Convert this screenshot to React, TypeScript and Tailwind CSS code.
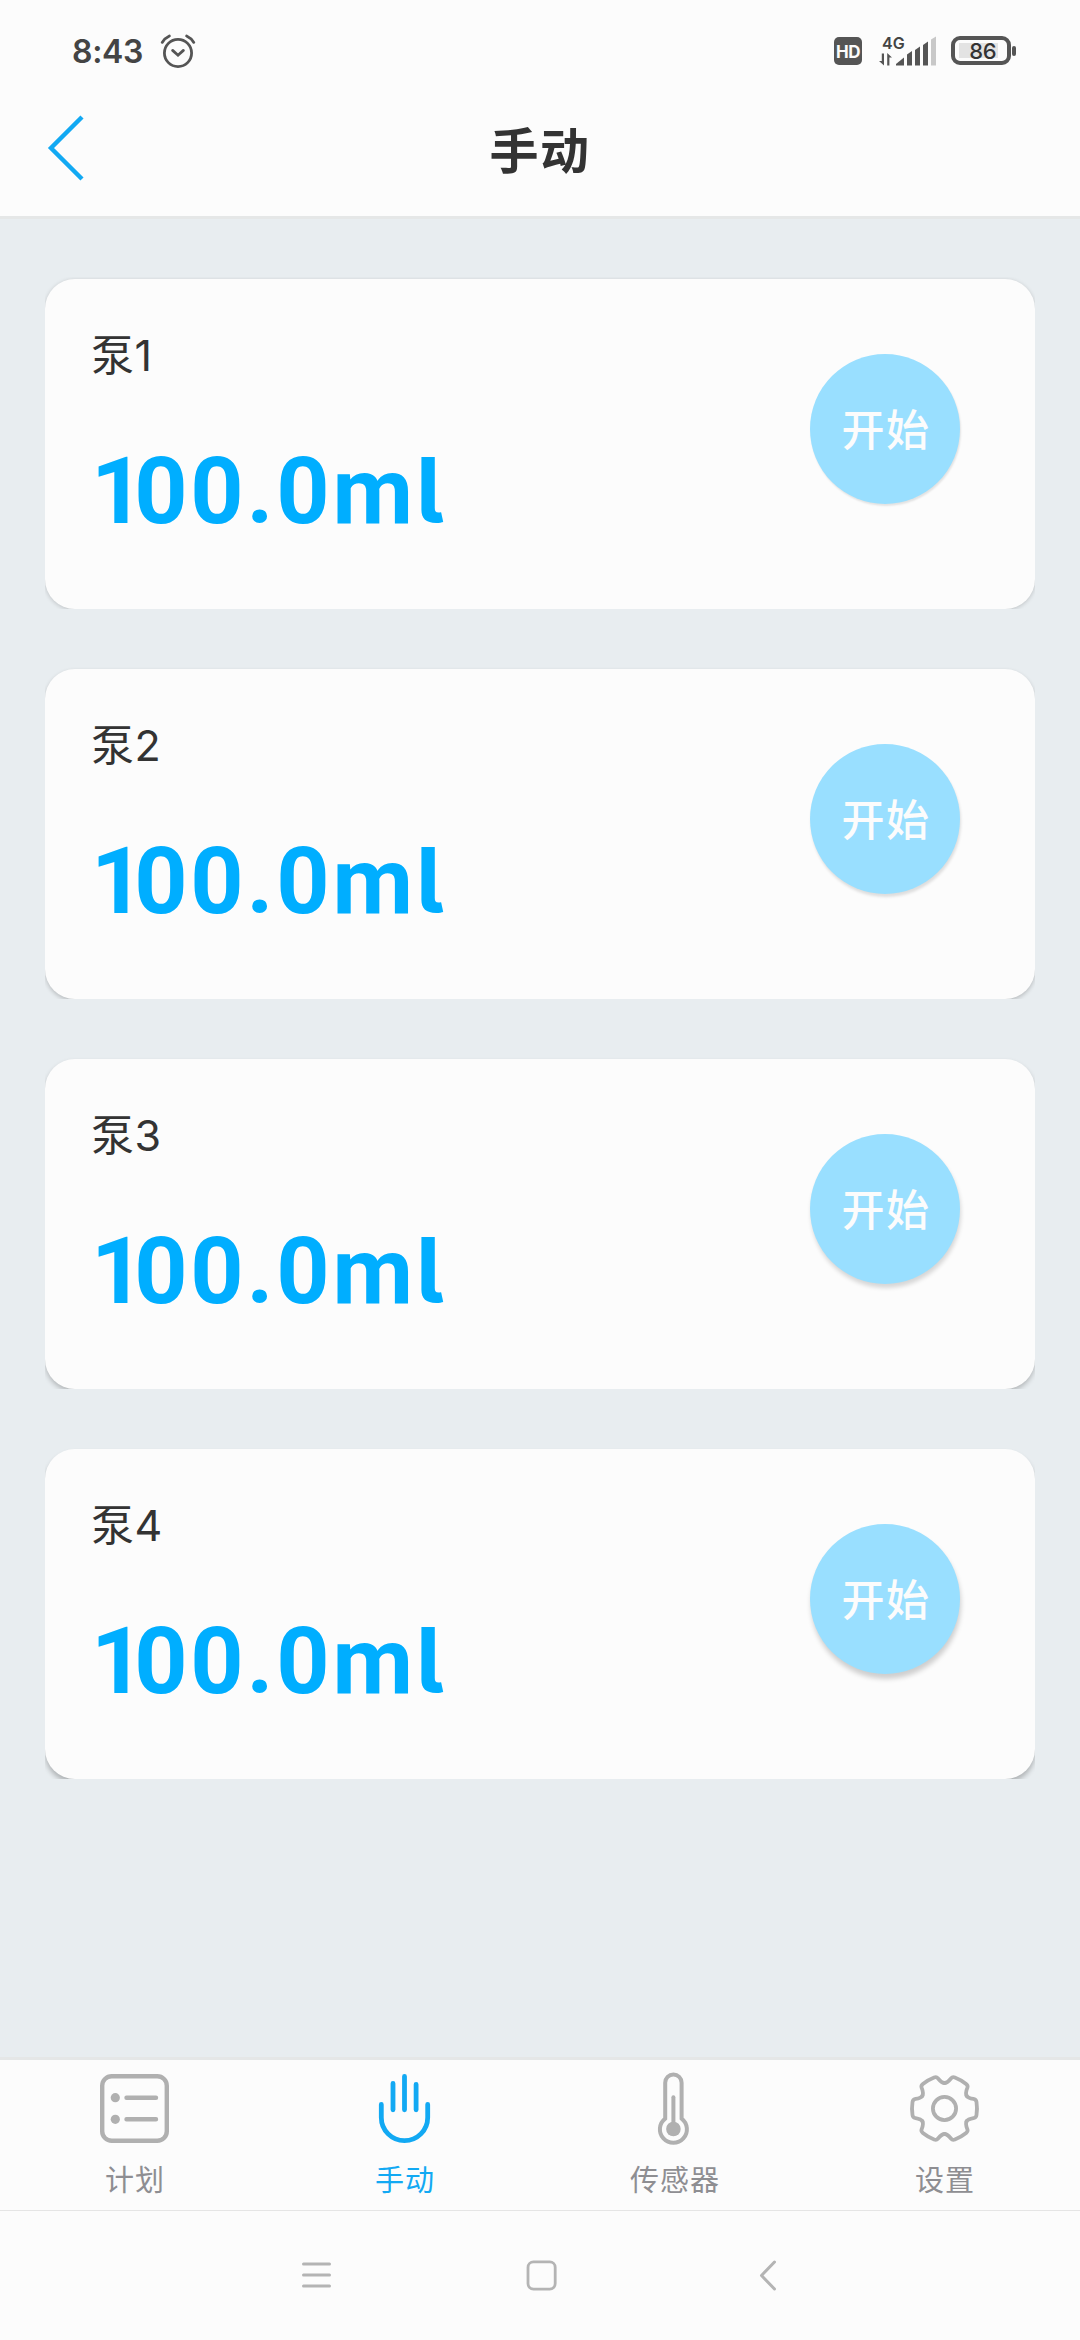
import type { ReactNode } from "react";

interface Pump {
  name: string;
  volume: string;
  cardShadow: string;
  buttonShadow: string;
}

interface Tab {
  label: string;
  icon: ReactNode;
  active?: boolean;
}

// Shadows get deeper towards the bottom of the list
const PUMPS: Pump[] = [
  {
    name: "泵1",
    volume: "100.0",
    cardShadow: "shadow-[0_1px_4px_rgba(0,0,0,0.18)]",
    buttonShadow: "shadow-[1px_2px_2px_rgba(0,0,0,0.1)]",
  },
  {
    name: "泵2",
    volume: "100.0",
    cardShadow: "shadow-[0_2px_4px_rgba(0,0,0,0.2)]",
    buttonShadow: "shadow-[1px_3px_3px_rgba(0,0,0,0.12)]",
  },
  {
    name: "泵3",
    volume: "100.0",
    cardShadow: "shadow-[0_3px_5px_rgba(0,0,0,0.22)]",
    buttonShadow: "shadow-[1px_4px_4px_rgba(0,0,0,0.15)]",
  },
  {
    name: "泵4",
    volume: "100.0",
    cardShadow: "shadow-[0_4px_5px_rgba(0,0,0,0.24)]",
    buttonShadow: "shadow-[1px_5px_5px_rgba(0,0,0,0.18)]",
  },
];

const GEAR_TEETH = [0, 60, 120, 180, 240, 300];

const PlanIcon = () => (
  <svg width="80" height="80" viewBox="0 0 80 80" fill="none" stroke="#b0b0b0" strokeWidth="4.4" strokeLinecap="round">
    <rect x="7.2" y="6.2" width="64.6" height="64.6" rx="9.5" />
    <path d="M31.5 27.7H61M31.5 49.3H61" />
    <circle cx="20.3" cy="27.7" r="4.6" fill="#b0b0b0" stroke="none" />
    <circle cx="20.3" cy="49.3" r="4.6" fill="#b0b0b0" stroke="none" />
  </svg>
);

const HandIcon = () => (
  <svg width="80" height="80" viewBox="0 0 80 80" fill="none" stroke="#12a9f3" strokeWidth="4.8" strokeLinecap="round">
    <path d="M28 13.5V39.8M39.5 6.4V39.8M51.1 14.4V39.8" />
    <path d="M16.3 34.4V47.5a23.2 23.2 0 0 0 46.4 0V34.4" />
  </svg>
);

const ThermometerIcon = () => (
  <svg width="80" height="80" viewBox="0 0 80 80" fill="none" stroke="#b0b0b0" strokeWidth="4" strokeLinecap="round">
    <path d="M30.2 48.6V12.7a8.2 8.2 0 0 1 16.4 0v35.9a13.5 13.5 0 1 1 -16.4 0Z" />
    <path d="M38.4 27.2V56" />
    <circle cx="38.4" cy="59" r="7.3" fill="#b0b0b0" stroke="none" />
  </svg>
);

const GearIcon = () => (
  <svg width="80" height="80" viewBox="0 0 80 80" fill="none" stroke="#b0b0b0" strokeWidth="3.8" strokeLinecap="round">
    <g transform="translate(39.5 38.5)">
      {GEAR_TEETH.map((deg) => (
        <path
          key={deg}
          transform={`rotate(${deg})`}
          d="M22.1 -12.75C23.6 -10.2 26.6 -9.9 29.6 -9.4Q31.6 -9 32 -6.5Q33 0 32 6.5Q31.6 9 29.6 9.4C26.6 9.9 23.6 10.2 22.1 12.75"
        />
      ))}
      <circle r="11.6" />
    </g>
  </svg>
);

const TABS: Tab[] = [
  { label: "计划", icon: <PlanIcon /> },
  { label: "手动", icon: <HandIcon />, active: true },
  { label: "传感器", icon: <ThermometerIcon /> },
  { label: "设置", icon: <GearIcon /> },
];

function StatusBar() {
  return (
    <div className="flex h-[100px] items-center justify-between pl-[72px] pr-[64px]">
      <div className="flex items-center">
        <span className="w-[86px] pt-[3px] text-[32px] font-semibold leading-[40px] tracking-[-0.3px] text-[#444]">8:43</span>
        <svg width="40" height="40" viewBox="0 0 40 40" fill="none" stroke="#555" strokeWidth="2.8" strokeLinecap="round">
          <circle cx="20" cy="23" r="13.6" />
          <path d="M14.6 20.4L20 25.2L25.4 20.4" />
          <path d="M4.2 12.4Q7 8 11.4 6M28.6 6Q33 8 35.8 12.4" />
        </svg>
      </div>

      <div className="flex items-center pt-px">
        <div className="flex h-7 w-7 items-center justify-center rounded-[5px] bg-[#555] pt-[3px] text-[17px] font-bold leading-none tracking-[-0.5px] text-[#fcfcfc]">
          HD
        </div>

        {/* Network type over the signal bars */}
        <div className="relative ml-[16px] h-8 w-[60px]">
          <span className="absolute left-1 top-0 text-[16px] font-semibold leading-[16px] text-[#444]">4G</span>
          <svg className="h-8 w-[60px]" viewBox="0 0 60 32" fill="#555">
            <path d="M3.8 18.5H6V30.5L1 26H3.8ZM9.2 30.5V18L14 22.5H11.4V30.5Z" />
            <path d="M18 30.5V29L26 22.5V30.5Z" />
            <path d="M29 30.5V19.5L34 16V30.5Z" />
            <path d="M37 30.5V15L42 11.5V30.5Z" />
            <path d="M45 30.5V10L50 6.5V30.5Z" />
            <path d="M53 30.5V4.5L58 1.5V30.5Z" fill="#c8c8c8" />
          </svg>
        </div>

        <div className="ml-[13px] flex h-[29px] w-[60px] items-center rounded-[9px] border-4 border-[#555] px-1">
          <div className="flex h-[15px] w-[39px] items-center justify-end bg-[#e3e3e3] pr-0.5 text-[22px] font-medium leading-none tracking-[-0.5px] text-[#333]">
            86
          </div>
        </div>
        <div className="ml-px h-[10px] w-1 rounded-full bg-[#555]" />
      </div>
    </div>
  );
}

function PumpCard({ pump }: { pump: Pump }) {
  return (
    <div className="overflow-hidden pt-0.5">
      <div className={`flex h-[330px] justify-between rounded-[30px] bg-[#fcfcfc] pl-[46px] pr-[75px] ${pump.cardShadow}`}>
        <div className="pt-[46px]">
          <h2 className="text-[43px] leading-[60px] tracking-[0.5px] text-[#333]">{pump.name}</h2>
          <p className="mt-[57px] font-['Roboto',sans-serif] text-[93px] font-bold leading-[100px] tracking-[2.8px] text-[#00aeff] first-letter:mr-[-13px]">
            {pump.volume}m
            {/* Inter has the l with a tail */}
            <span className="font-['Inter',sans-serif] text-[91px] leading-none [font-feature-settings:'cv05']">l</span>
          </p>
        </div>
        <button
          className={`mt-[75px] flex size-[150px] items-center justify-center rounded-full bg-[#99dfff] pl-0.5 pt-[3px] text-[43px] font-medium tracking-[1.5px] text-[#fcfcfc] ${pump.buttonShadow}`}
        >
          开始
        </button>
      </div>
    </div>
  );
}

export default function App() {
  return (
    <main className="flex h-[2340px] w-[1080px] flex-col overflow-hidden bg-[#e8edf0] font-['Inter','Noto_Sans_CJK_SC',sans-serif]">
      {/* ── Header ── */}
      <header className="h-[219px] border-b-[3px] border-[#e5e7e7] bg-[#fcfcfc]">
        <StatusBar />
        <div className="grid h-[100px] grid-cols-3 items-center px-[45px]">
          <svg width="40" height="70" viewBox="0 0 40 70" fill="none" stroke="#12a9f3" strokeWidth="4.4">
            <path d="M37 2L6 33L37 64" />
          </svg>
          <h1 className="pt-[3px] text-center text-[49px] font-bold leading-[60px] tracking-[1.5px] text-[#333]">手动</h1>
        </div>
      </header>

      {/* ── Pumps ── */}
      <section className="flex flex-1 flex-col gap-[58px] px-[45px] pt-[58px]">
        {PUMPS.map((pump) => (
          <PumpCard key={pump.name} pump={pump} />
        ))}
      </section>

      {/* ── Tab bar ── */}
      <nav className="grid h-[153px] grid-cols-4 border-t-[3px] border-[#e5e7e7] bg-[#fcfcfc]">
        {TABS.map((tab) => (
          <div key={tab.label} className="flex flex-col items-center pt-[10px]">
            {tab.icon}
            <span className={`mt-[11px] text-[29px] leading-[40px] tracking-[1px] ${tab.active ? "text-[#12a9f3]" : "text-[#8e8e92]"}`}>
              {tab.label}
            </span>
          </div>
        ))}
      </nav>

      {/* ── System navigation ── */}
      <footer className="flex h-[130px] items-center justify-between border-t border-[#e5e5e5] bg-[#fcfcfc] pl-[297px] pr-[292px]">
        <svg width="40" height="40" viewBox="0 0 40 40" fill="none" stroke="#b4b4b4" strokeWidth="3" strokeLinecap="round">
          <path d="M6.5 8H32.5M6.5 19H32.5M6.5 30H32.5" />
        </svg>
        <svg width="40" height="40" viewBox="0 0 40 40" fill="none" stroke="#b4b4b4" strokeWidth="2.8">
          <rect x="5" y="5.9" width="27.2" height="27.2" rx="5.5" />
        </svg>
        <svg width="40" height="40" viewBox="0 0 40 40" fill="none" stroke="#b4b4b4" strokeWidth="3" strokeLinecap="round" strokeLinejoin="round">
          <path d="M26.5 6L13.5 19.5L26.5 33" />
        </svg>
      </footer>
    </main>
  );
}
